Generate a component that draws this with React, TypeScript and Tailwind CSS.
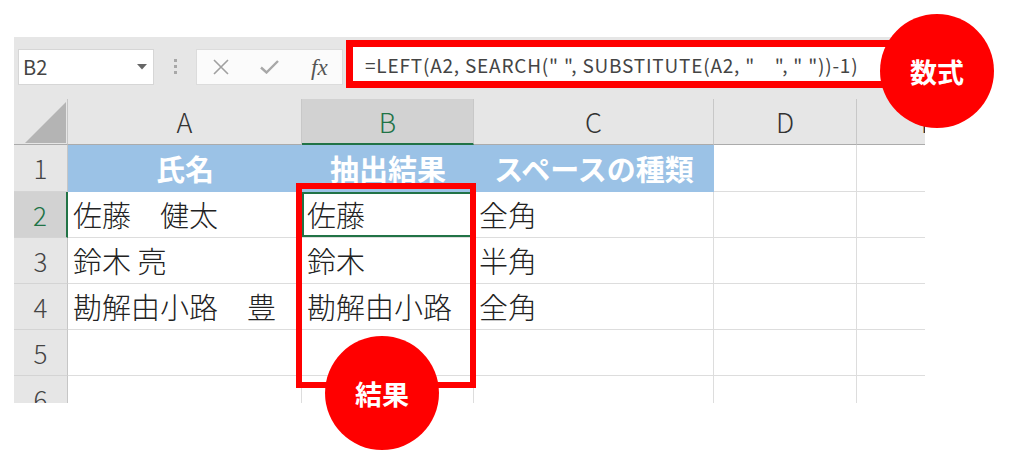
import React from "react";

const rows = [
  { n: "2", a: "佐藤　健太", b: "佐藤", c: "全角", active: true },
  { n: "3", a: "鈴木 亮", b: "鈴木", c: "半角", active: false },
  { n: "4", a: "勘解由小路　豊", b: "勘解由小路", c: "全角", active: false },
  { n: "5", a: "", b: "", c: "", active: false },
  { n: "6", a: "", b: "", c: "", active: false },
];

function ColHeader({ label, selected, last }: { label: string; selected?: boolean; last?: boolean }) {
  return (
    <div
      className={
        selected
          ? "bg-[#d2d2d2] text-[#217346] border-r border-r-[#c8c8c8] border-b-2 border-b-[#217346] flex items-center justify-center text-[27px] font-light leading-none"
          : last
          ? "bg-[#e6e6e6] text-[#333] border-b border-b-[#ababab] flex items-center justify-center text-[27px] font-light leading-none"
          : "bg-[#e6e6e6] text-[#333] border-r border-r-[#c8c8c8] border-b border-b-[#ababab] flex items-center justify-center text-[27px] font-light leading-none"
      }
    >
      {label}
    </div>
  );
}

const cellCls =
  "border-r border-b border-[#dddddd] flex items-center pl-[5px] text-[29px] font-light leading-none text-[#222] whitespace-pre";

export default function App() {
  return (
    <div className="w-[1024px] h-[467px] bg-white overflow-hidden font-['Noto_Sans_CJK_JP','Noto_Sans',sans-serif]">
      <div className="relative ml-[14px] mt-[37px] w-[911px]">
        {/* toolbar */}
        <div className="h-[62px] bg-[#e6e6e6] flex items-start">
          <div className="ml-[4px] mt-[12px] w-[136px] h-[36px] bg-white border border-[#d6d6d6] flex items-center justify-between pl-[4px] pr-[6px]">
            <span className="text-[20px] leading-none text-[#444]">B2</span>
            <svg width="10" height="6" viewBox="0 0 10 6">
              <polygon points="0,0 10,0 5,5.5" fill="#666" />
            </svg>
          </div>
          <div className="ml-[20px] mt-[22px] flex flex-col gap-[3px]">
            <div className="w-[3px] h-[3px] bg-[#a8a8a8]" />
            <div className="w-[3px] h-[3px] bg-[#a8a8a8]" />
            <div className="w-[3px] h-[3px] bg-[#a8a8a8]" />
          </div>
          <div className="ml-[19px] mt-[12px] w-[147px] h-[36px] bg-[#fbfbfb] border border-[#dcdcdc] flex items-center pl-[16px]">
            <svg width="16" height="16" viewBox="0 0 16 16">
              <path d="M1 1 L15 15 M15 1 L1 15" stroke="#a0a0a0" strokeWidth="1.6" fill="none" />
            </svg>
            <svg className="ml-[31px]" width="19" height="14" viewBox="0 0 19 14">
              <path d="M1 7.5 L6.5 12.5 L18 1" stroke="#a8a8a8" strokeWidth="2.4" fill="none" />
            </svg>
            <span className="ml-[32px] font-['Liberation_Serif',serif] italic text-[23px] leading-none text-[#555]">fx</span>
          </div>
          <div className="ml-[3px] mt-[3px] w-[552px] h-[48px] border-[7px] border-[#ff0000] bg-white flex items-center pl-[12px]">
            <span className="text-[19px] leading-none text-[#444] whitespace-pre tracking-[0.8px]">
              {'=LEFT(A2, SEARCH(" ", SUBSTITUTE(A2, "　", " "))-1)'}
            </span>
          </div>
        </div>

        {/* grid */}
        <div className="w-[911px] h-[304px] overflow-hidden">
          <div className="grid grid-cols-[54px_234px_172px_240px_143px_143px] grid-rows-[46px_47px_46px_46px_46px_46px_46px] w-[986px]">
            {/* header row */}
            <div className="bg-[#e6e6e6] border-r border-r-[#c6c6c6] border-b border-b-[#ababab] flex items-end justify-end pr-[1px] pb-[1px]">
              <svg width="41" height="41" viewBox="0 0 41 41">
                <polygon points="0,41 41,0 41,41" fill="#b4b4b4" />
              </svg>
            </div>
            <ColHeader label="A" />
            <ColHeader label="B" selected />
            <ColHeader label="C" />
            <ColHeader label="D" />
            <ColHeader label="E" last />

            {/* row 1 */}
            <div className="bg-[#e6e6e6] border-r border-r-[#c6c6c6] border-b border-b-[#d4d4d4] flex items-center justify-center text-[26px] font-light leading-none text-[#444]">
              1
            </div>
            <div className="bg-[#9bc2e6] flex items-center justify-center text-[29px] font-bold leading-none text-white">氏名</div>
            <div className="bg-[#9bc2e6] flex items-center justify-center text-[29px] font-bold leading-none text-white">抽出結果</div>
            <div className="bg-[#9bc2e6] flex items-center justify-center text-[29px] font-bold leading-none text-white">スペースの種類</div>
            <div className="border-r border-b border-[#dddddd]" />
            <div className="border-r border-b border-[#dddddd]" />

            {rows.map((r) => (
              <React.Fragment key={r.n}>
                <div
                  className={
                    r.active
                      ? "bg-[#d2d2d2] border-r-2 border-r-[#217346] border-b border-b-[#d4d4d4] flex items-center justify-center text-[26px] font-light leading-none text-[#217346]"
                      : "bg-[#e6e6e6] border-r border-r-[#c6c6c6] border-b border-b-[#d4d4d4] flex items-center justify-center text-[26px] font-light leading-none text-[#444]"
                  }
                >
                  {r.n}
                </div>
                <div className={cellCls}>{r.a}</div>
                <div className={r.active ? "ring-2 ring-inset ring-[#217346] " + cellCls : cellCls}>{r.b}</div>
                <div className={cellCls}>{r.c}</div>
                <div className="border-r border-b border-[#dddddd]" />
                <div className="border-r border-b border-[#dddddd]" />
              </React.Fragment>
            ))}
          </div>
        </div>

        {/* annotations */}
        <div className="absolute left-[282px] top-[146px] w-[180px] h-[205px] border-[6px] border-[#ff0000]" />
        <div className="absolute left-[866px] top-[-23px] w-[114px] h-[114px] rounded-full bg-[#ff0000] flex items-center justify-center text-white font-bold text-[27px] leading-none">
          数式
        </div>
        <div className="absolute left-[311px] top-[299px] w-[114px] h-[114px] rounded-full bg-[#ff0000] flex items-center justify-center text-white font-bold text-[27px] leading-none">
          結果
        </div>
      </div>
    </div>
  );
}
